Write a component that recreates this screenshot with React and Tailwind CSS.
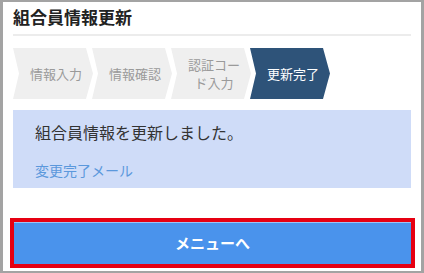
import React from "react";

const steps = [
  { label: ["情報入力"], active: false },
  { label: ["情報確認"], active: false },
  { label: ["認証コー", "ド入力"], active: false },
  { label: ["更新完了"], active: true },
];

const Step = ({ label, active, first }) => {
  return (
    <div
      className={`${first ? "" : "-ml-[1px]"} w-[80px] h-[51px] flex items-center justify-center pl-[6px] [clip-path:polygon(0_0,calc(100%-7px)_0,100%_50%,calc(100%-7px)_100%,0_100%,6px_50%)] ${
        active ? "bg-[#2e5379] text-white" : "bg-[#efefef] text-[#9a9a9a]"
      }`}
    >
      <span className="text-[13px] leading-[18px] text-center">
        {label.map((l, i) => (
          <React.Fragment key={l}>
            {i > 0 && <br />}
            {l}
          </React.Fragment>
        ))}
      </span>
    </div>
  );
};

const App = () => {
  return (
    <div className="w-[424px] h-[273px] bg-white border-t-2 border-b-2 border-l-[3px] border-r-[3px] border-[#a3a3a3] px-[10px] flex flex-col font-['Noto_Sans_CJK_JP',sans-serif]">
      <h1 className="mt-[3px] text-[17px] leading-[24px] font-bold text-[#222]">組合員情報更新</h1>
      <div className="mt-[5px] h-[2px] bg-[#ececec]"></div>

      <div className="mt-[12px] flex">
        {steps.map((s, i) => (
          <Step key={i} label={s.label} active={s.active} first={i === 0} />
        ))}
      </div>

      <div className="mt-[11px] h-[78px] bg-[#cfdcf8] pl-[22px] pt-[10px]">
        <p className="text-[16px] leading-[24px] text-[#333]">組合員情報を更新しました。</p>
        <p className="mt-[16px] text-[14px] leading-[20px] text-[#5b98dc]">変更完了メール</p>
      </div>

      <div className="mt-[30px] -ml-[3px] w-[405px] border-4 border-[#e60012]">
        <button className="w-full h-[42px] bg-[#4a93ec] border-t border-[#9cc3f5] text-white font-bold text-[15px] flex items-center justify-center">
          メニューへ
        </button>
      </div>
    </div>
  );
};

export default App;
